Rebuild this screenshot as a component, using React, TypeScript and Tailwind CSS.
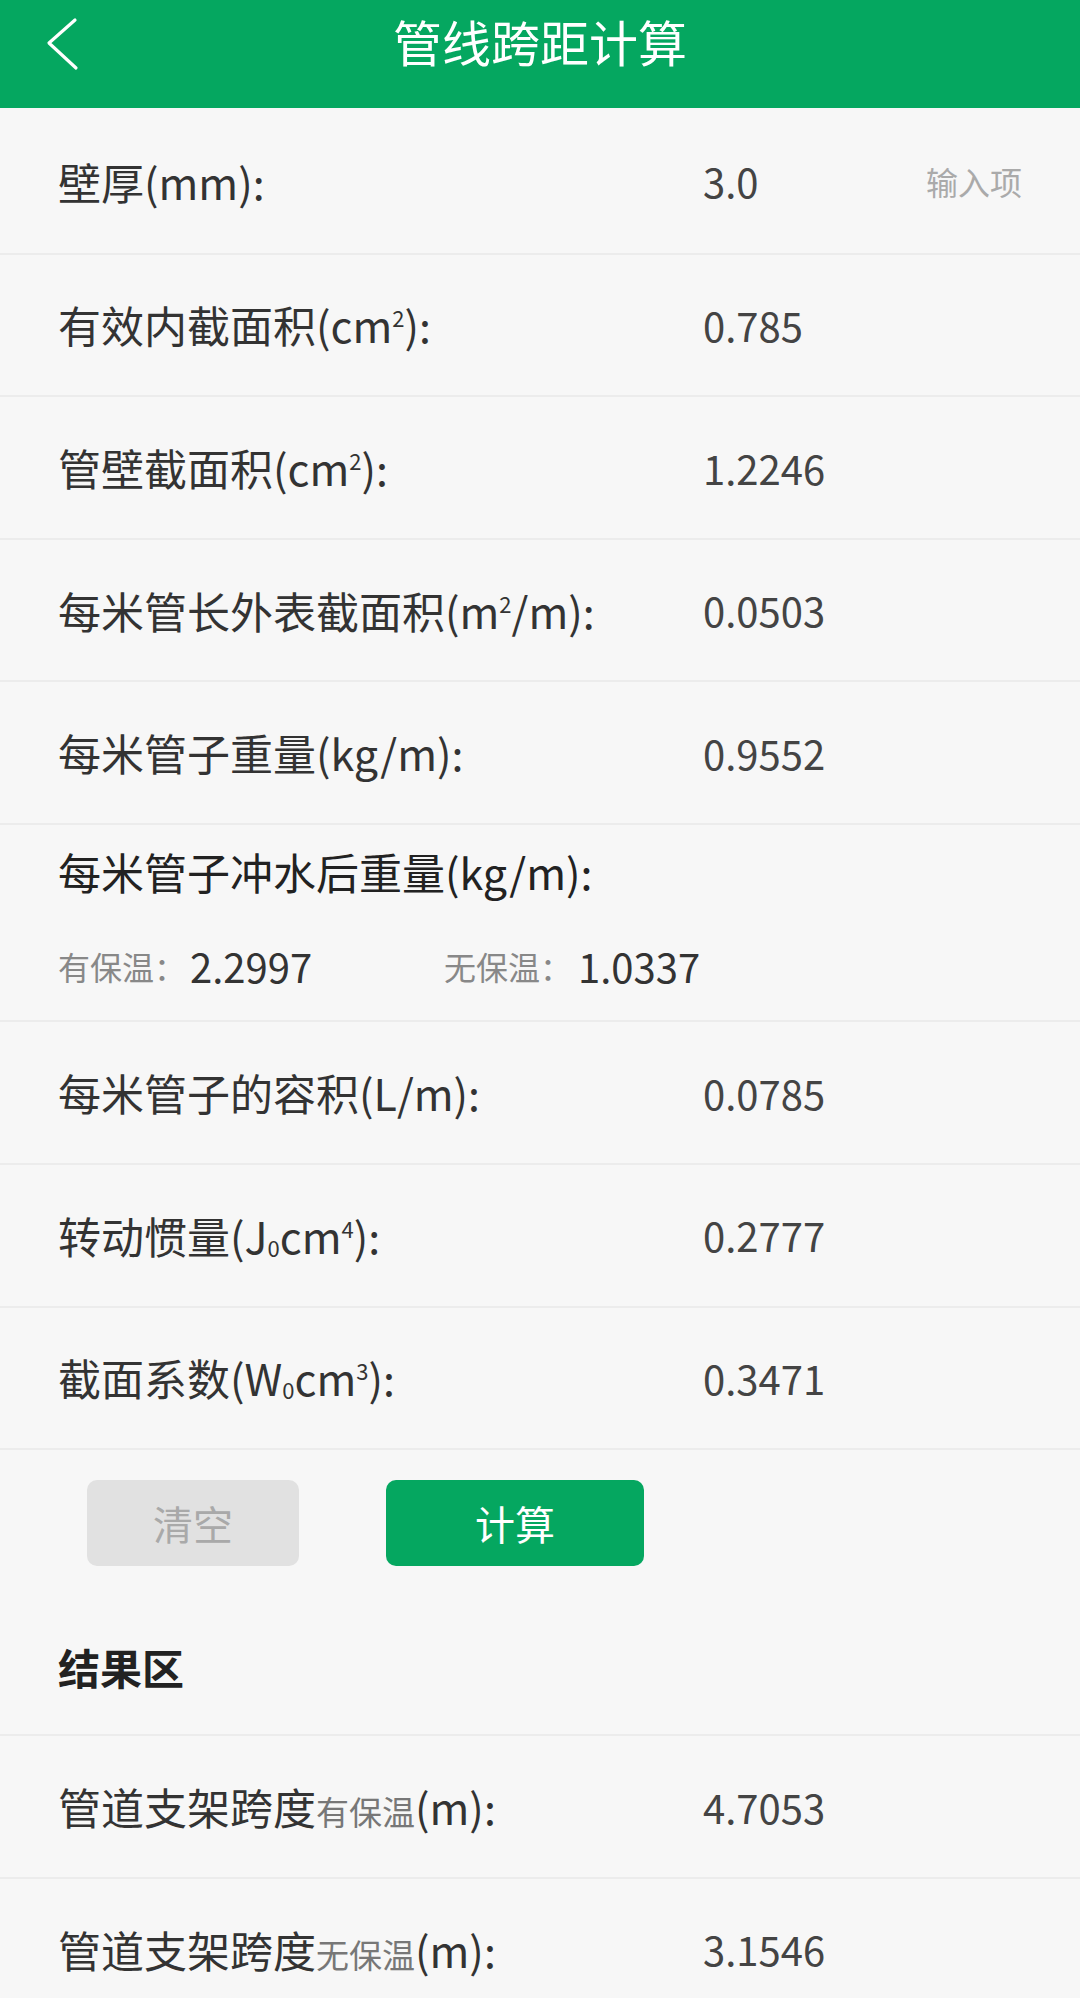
import type { ReactNode } from "react";

type Item = { label: ReactNode; value: string; hint?: string };

const sup = (s: string) => <span className="text-[22px] relative -top-[16px]">{s}</span>;
const sub = (s: string) => <span className="text-[22px] relative top-[3px]">{s}</span>;

const topRows: Item[] = [
  { label: "壁厚(mm):", value: "3.0", hint: "输入项" },
  { label: <>有效内截面积(cm{sup("2")}):</>, value: "0.785" },
  { label: <>管壁截面积(cm{sup("2")}):</>, value: "1.2246" },
  { label: <>每米管长外表截面积(m{sup("2")}/m):</>, value: "0.0503" },
  { label: "每米管子重量(kg/m):", value: "0.9552" },
];

const midRows: Item[] = [
  { label: "每米管子的容积(L/m):", value: "0.0785" },
  { label: <>转动惯量(J{sub("0")}cm{sup("4")}):</>, value: "0.2777" },
  { label: <>截面系数(W{sub("0")}cm{sup("3")}):</>, value: "0.3471" },
];

const results = [
  { tag: "有保温", value: "4.7053" },
  { tag: "无保温", value: "3.1546" },
];

export default function App() {
  return (
    <div className="w-[1080px] h-[1998px] overflow-hidden bg-[#f7f7f7] flex flex-col font-['Noto_Sans_CJK_SC',sans-serif]">
      {/* Header */}
      <div className="relative h-[108px] shrink-0 bg-[#05a760] flex items-center justify-center">
        <button className="absolute left-[44px] top-[16px] w-[40px] h-[60px]">
          <svg viewBox="0 0 40 60" className="w-[40px] h-[60px]">
            <path d="M31 4 L5 27 L32 52" fill="none" stroke="white" strokeWidth="3.2" strokeLinecap="round" strokeLinejoin="round" />
          </svg>
        </button>
        <h1 className="text-[49px] leading-none text-white -mt-[28px]">管线跨距计算</h1>
      </div>

      {/* Inputs / params */}
      <div className="flex flex-col">
        {topRows.map((r, i) => (
          <Row key={i} item={r} first={i === 0} />
        ))}

        <div className="h-[197.4px] shrink-0 border-b-2 border-[#ececec] px-[58px] pt-[25px] flex flex-col">
          <span className="text-[43px] leading-none text-[#222]">每米管子冲水后重量(kg/m):</span>
          <div className="flex items-center h-[40px] mt-[53px]">
            <div className="w-[386px] flex items-center">
              <span className="text-[32px] text-[#888] leading-none">有保温：</span>
              <span className="text-[40px] text-[#333] leading-none ml-[4px]">2.2997</span>
            </div>
            <span className="text-[32px] text-[#888] leading-none">无保温：</span>
            <span className="text-[40px] text-[#333] leading-none ml-[6px]">1.0337</span>
          </div>
        </div>

        {midRows.map((r, i) => (
          <Row key={i} item={r} />
        ))}
      </div>

      {/* Buttons */}
      <div className="flex gap-[87px] px-[87px] pt-[30px]">
        <button className="w-[212px] h-[86px] rounded-[10px] bg-[#e1e1e1] text-[#a9a9a9] text-[40px] leading-none">清空</button>
        <button className="w-[258px] h-[86px] rounded-[10px] bg-[#05a760] text-white text-[40px] leading-none">计算</button>
      </div>

      <div className="h-[170px] shrink-0 border-b-2 border-[#ececec] px-[58px] flex items-center pt-[34px]">
        <span className="text-[42px] font-bold leading-none text-[#222]">结果区</span>
      </div>

      {/* Results */}
      {results.map((r, i) => (
        <div key={i} className="h-[142.6px] shrink-0 border-b-2 border-[#ececec] px-[58px] flex items-center">
          <div className="w-[645px] flex items-baseline text-[#333] leading-none">
            <span className="text-[43px]">管道支架跨度</span>
            <span className="text-[33px] text-[#777]">{r.tag}</span>
            <span className="text-[43px]">(m):</span>
          </div>
          <span className="text-[40px] text-[#444] leading-none">{r.value}</span>
        </div>
      ))}
    </div>
  );
}

function Row({ item, first }: { item: Item; first?: boolean }) {
  return (
    <div
      className={`${first ? "h-[146.7px] pt-[2px]" : "h-[142.6px]"} shrink-0 border-b-2 border-[#ececec] px-[58px] flex items-center`}
    >
      <div className="w-[645px] text-[43px] leading-none text-[#333] whitespace-nowrap">{item.label}</div>
      <span className="flex-1 text-[40px] leading-none text-[#444]">{item.value}</span>
      {item.hint && <span className="text-[32px] leading-none text-[#aaa]">{item.hint}</span>}
    </div>
  );
}
